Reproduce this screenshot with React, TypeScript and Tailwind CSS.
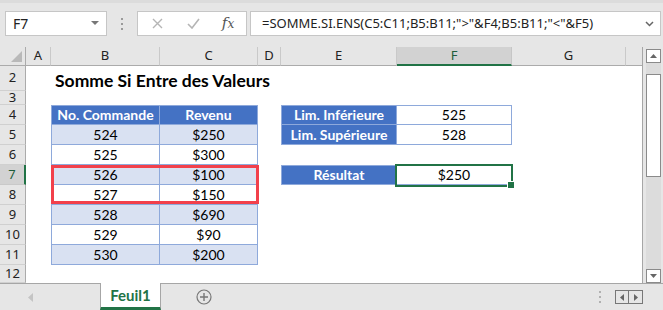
import React from 'react';

type Kind = 'h' | 'a' | 'w';
type Cell = { t?: string; k?: Kind; l?: boolean; top?: boolean; title?: boolean; red?: boolean; sel?: boolean };

const cellFont = { fontFamily: 'Lato, "Liberation Sans", sans-serif' };
const uiFont = { fontFamily: '"Noto Sans", "Open Sans", sans-serif' };

const colLetters = ['A', 'B', 'C', 'D', 'E', 'F', 'G'];

// rows 2..12, each with cells for columns A..G
const rows: { n: number; cells: Cell[] }[] = [
  { n: 2, cells: [{}, { t: 'Somme Si Entre des Valeurs', title: true }, {}, {}, {}, {}, {}] },
  { n: 3, cells: [{}, {}, {}, {}, {}, {}, {}] },
  {
    n: 4,
    cells: [
      {},
      { t: 'No. Commande', k: 'h', l: true, top: true },
      { t: 'Revenu', k: 'h', top: true },
      {},
      { t: 'Lim. Inférieure', k: 'h', l: true, top: true },
      { t: '525', k: 'w', top: true },
      {},
    ],
  },
  {
    n: 5,
    cells: [
      {},
      { t: '524', k: 'a', l: true },
      { t: '$250', k: 'a' },
      {},
      { t: 'Lim. Supérieure', k: 'h', l: true },
      { t: '528', k: 'w' },
      {},
    ],
  },
  { n: 6, cells: [{}, { t: '525', k: 'w', l: true }, { t: '$300', k: 'w' }, {}, {}, {}, {}] },
  {
    n: 7,
    cells: [
      {},
      { t: '526', k: 'a', l: true, red: true },
      { t: '$100', k: 'a' },
      {},
      { t: 'Résultat', k: 'h', l: true, top: true },
      { t: '$250', k: 'w', top: true, sel: true },
      {},
    ],
  },
  { n: 8, cells: [{}, { t: '527', k: 'w', l: true }, { t: '$150', k: 'w' }, {}, {}, {}, {}] },
  { n: 9, cells: [{}, { t: '528', k: 'a', l: true }, { t: '$690', k: 'a' }, {}, {}, {}, {}] },
  { n: 10, cells: [{}, { t: '529', k: 'w', l: true }, { t: '$90', k: 'w' }, {}, {}, {}, {}] },
  { n: 11, cells: [{}, { t: '530', k: 'a', l: true }, { t: '$200', k: 'a' }, {}, {}, {}, {}] },
  { n: 12, cells: [{}, {}, {}, {}, {}, {}, {}] },
];

function BodyCell({ c }: { c: Cell }) {
  if (c.title) {
    return (
      <div className="relative bg-white flex items-end pl-[4px] pb-[2px] whitespace-nowrap overflow-visible z-10" style={cellFont}>
        <span className="text-[17.5px] font-bold text-black leading-none">{c.t}</span>
      </div>
    );
  }
  if (!c.k) return <div className="bg-white" />;
  const bg = c.k === 'h' ? 'bg-[#4472c4] text-white font-bold' : c.k === 'a' ? 'bg-[#d9e1f2] text-black' : 'bg-white text-black';
  return (
    <div
      className={
        'relative flex items-center justify-center text-[14px] border-r border-b border-[#8ea9db] ' +
        bg +
        (c.l ? ' border-l' : '') +
        (c.top ? ' border-t' : '')
      }
      style={cellFont}
    >
      <span className="leading-none">{c.t}</span>
      {c.red && <div className="absolute left-[-1px] top-[0px] w-[208px] h-[39px] border-[3px] border-[#f2404b] z-20" />}
      {c.sel && (
        <div className="absolute left-[-2px] top-[-2px] w-[118px] h-[23px] border-2 border-[#217346] z-20">
          <div className="absolute right-[-4px] bottom-[-4px] w-[6px] h-[6px] bg-[#217346] border border-white box-content" />
        </div>
      )}
    </div>
  );
}

function Toolbar() {
  return (
    <div className="h-[47px] flex items-start pt-[11px] pl-[5px] bg-[#e6e6e6] border-t-[3px] border-[#dcdcdc]" style={uiFont}>
      <div className="w-[102px] h-[25px] bg-white border border-[#c6c6c6] flex items-center justify-between pl-[7px] pr-[7px] mt-[-3px]">
        <span className="text-[14px] text-[#222]">F7</span>
        <svg width="8" height="5" viewBox="0 0 8 5">
          <path d="M0 0h8L4 4z" fill="#777" />
        </svg>
      </div>
      <div className="w-[30px] h-[25px] flex flex-col items-center justify-center gap-[3px] mt-[-3px]">
        <div className="w-[2px] h-[2px] bg-[#9a9a9a]" />
        <div className="w-[2px] h-[2px] bg-[#9a9a9a]" />
        <div className="w-[2px] h-[2px] bg-[#9a9a9a]" />
      </div>
      <div className="w-[110px] h-[25px] bg-white border border-[#c6c6c6] flex items-center mt-[-3px]">
        <div className="w-[38px] flex justify-center">
          <svg width="11" height="11" viewBox="0 0 11 11">
            <path d="M1 1l9 9M10 1l-9 9" stroke="#b5b5b5" strokeWidth="1.4" />
          </svg>
        </div>
        <div className="w-[34px] flex justify-center">
          <svg width="13" height="11" viewBox="0 0 13 11">
            <path d="M1 6l4 4 7-9" stroke="#b5b5b5" strokeWidth="1.6" fill="none" />
          </svg>
        </div>
        <div className="w-[36px] flex justify-center">
          <span className="italic text-[15px] text-[#555] leading-none" style={{ fontFamily: '"DejaVu Serif", serif' }}>
            f<span className="text-[12px]">x</span>
          </span>
        </div>
      </div>
      <div className="ml-[3px] w-[411px] h-[25px] bg-white border border-[#c6c6c6] flex items-center justify-between pl-[11px] pr-[6px] mt-[-3px]">
        <span className="text-[13px] text-[#222] whitespace-nowrap">=SOMME.SI.ENS(C5:C11;B5:B11;"&gt;"&amp;F4;B5:B11;"&lt;"&amp;F5)</span>
        <svg width="9" height="6" viewBox="0 0 9 6">
          <path d="M1 1l3.5 3.5L8 1" stroke="#666" strokeWidth="1.5" fill="none" />
        </svg>
      </div>
    </div>
  );
}

function Sheet() {
  return (
    <div className="flex h-[236px] bg-[#e6e6e6]">
      <div
        className="w-[643px] grid grid-cols-[26px_25px_109px_98px_23px_116px_115px_114px_1fr] grid-rows-[19px_25px_14px_20px_20px_20px_20px_20px_20px_20px_20px_18px] border-r border-[#a6a6a6]"
        style={uiFont}
      >
        {/* corner */}
        <div className="relative border-r border-b border-[#ababab] bg-[#e6e6e6]">
          <svg className="absolute right-[3px] bottom-[3px]" width="11" height="11" viewBox="0 0 11 11">
            <path d="M11 0v11H0z" fill="#b9b9b9" />
          </svg>
        </div>
        {colLetters.map((l) =>
          l === 'F' ? (
            <div key={l} className="flex items-center justify-center bg-[#d2d2d2] border-r border-[#c6c6c6] border-b-2 border-b-[#217346] text-[13px] text-[#1e5d3a]">
              {l}
            </div>
          ) : (
            <div key={l} className="flex items-center justify-center border-r border-b border-r-[#c9c9c9] border-b-[#ababab] text-[13px] text-[#222]">
              {l}
            </div>
          )
        )}
        <div className="border-b border-[#ababab]" />
        {rows.map((r) => (
          <React.Fragment key={r.n}>
            {r.n === 7 ? (
              <div className="flex items-center justify-center bg-[#d2d2d2] border-b border-b-[#c9c9c9] border-r-2 border-r-[#217346] text-[13px] text-[#1e5d3a]">
                {r.n}
              </div>
            ) : (
              <div className="flex items-center justify-center border-b border-r border-b-[#d0d0d0] border-r-[#ababab] text-[13px] text-[#222]">
                {r.n}
              </div>
            )}
            {r.cells.map((c, i) => (
              <BodyCell key={i} c={c} />
            ))}
            <div className="bg-white" />
          </React.Fragment>
        ))}
      </div>
      <div className="ml-[3px] w-[15px] bg-[#dcdcdc] flex flex-col mt-[2px]">
        <div className="h-[14px] bg-white border border-[#8a8a8a] flex items-center justify-center">
          <svg width="7" height="4" viewBox="0 0 7 4">
            <path d="M0 4L3.5 0 7 4z" fill="#666" />
          </svg>
        </div>
        <div className="mt-[11px] h-[103px] bg-white border border-[#8a8a8a]" />
        <div className="flex-1" />
        <div className="h-[14px] bg-white border border-[#8a8a8a] flex items-center justify-center">
          <svg width="7" height="4" viewBox="0 0 7 4">
            <path d="M0 0h7L3.5 4z" fill="#666" />
          </svg>
        </div>
      </div>
    </div>
  );
}

function Tabs() {
  return (
    <div className="h-[27px] flex items-stretch bg-[#e6e6e6] border-t border-[#a6a6a6]" style={uiFont}>
      <div className="w-[100px] flex items-center">
        <div className="w-[58px] flex justify-center pl-[2px]">
          <svg width="5" height="9" viewBox="0 0 5 9">
            <path d="M5 0v9L0 4.5z" fill="#c4c4c4" />
          </svg>
        </div>
        <div className="w-[0px] flex justify-center ml-[-2px]">
          <svg width="5" height="9" viewBox="0 0 5 9">
            <path d="M0 0v9l5-4.5z" fill="#c4c4c4" />
          </svg>
        </div>
      </div>
      <div className="w-[61px] mt-[-1px] bg-white border-x border-[#a6a6a6] border-b-[3px] border-b-[#217346] flex items-center justify-center">
        <span className="text-[15px] font-bold text-[#217346]" style={cellFont}>
          Feuil1
        </span>
      </div>
      <div className="w-[86px] flex items-center justify-center">
        <svg width="16" height="16" viewBox="0 0 16 16">
          <circle cx="8" cy="8" r="7" stroke="#777" strokeWidth="1.2" fill="none" />
          <path d="M8 4v8M4 8h8" stroke="#777" strokeWidth="1.4" />
        </svg>
      </div>
      <div className="flex-1 flex items-center justify-end pr-[20px]">
        <div className="flex flex-col gap-[3px] mr-[14px]">
          <div className="w-[2px] h-[2px] bg-[#b0b0b0]" />
          <div className="w-[2px] h-[2px] bg-[#b0b0b0]" />
          <div className="w-[2px] h-[2px] bg-[#b0b0b0]" />
        </div>
        <div className="flex">
          <div className="w-[14px] h-[14px] border border-[#777] bg-[#e6e6e6] flex items-center justify-center">
            <svg width="4" height="7" viewBox="0 0 4 7">
              <path d="M4 0v7L0 3.5z" fill="#666" />
            </svg>
          </div>
          <div className="w-[14px] h-[14px] border border-l-0 border-[#777] bg-[#e6e6e6] flex items-center justify-center">
            <svg width="4" height="7" viewBox="0 0 4 7">
              <path d="M0 0v7l4-3.5z" fill="#666" />
            </svg>
          </div>
        </div>
      </div>
    </div>
  );
}

export default function App() {
  return (
    <div className="w-[663px] h-[310px] overflow-hidden flex flex-col bg-[#e6e6e6]">
      <Toolbar />
      <Sheet />
      <Tabs />
    </div>
  );
}
